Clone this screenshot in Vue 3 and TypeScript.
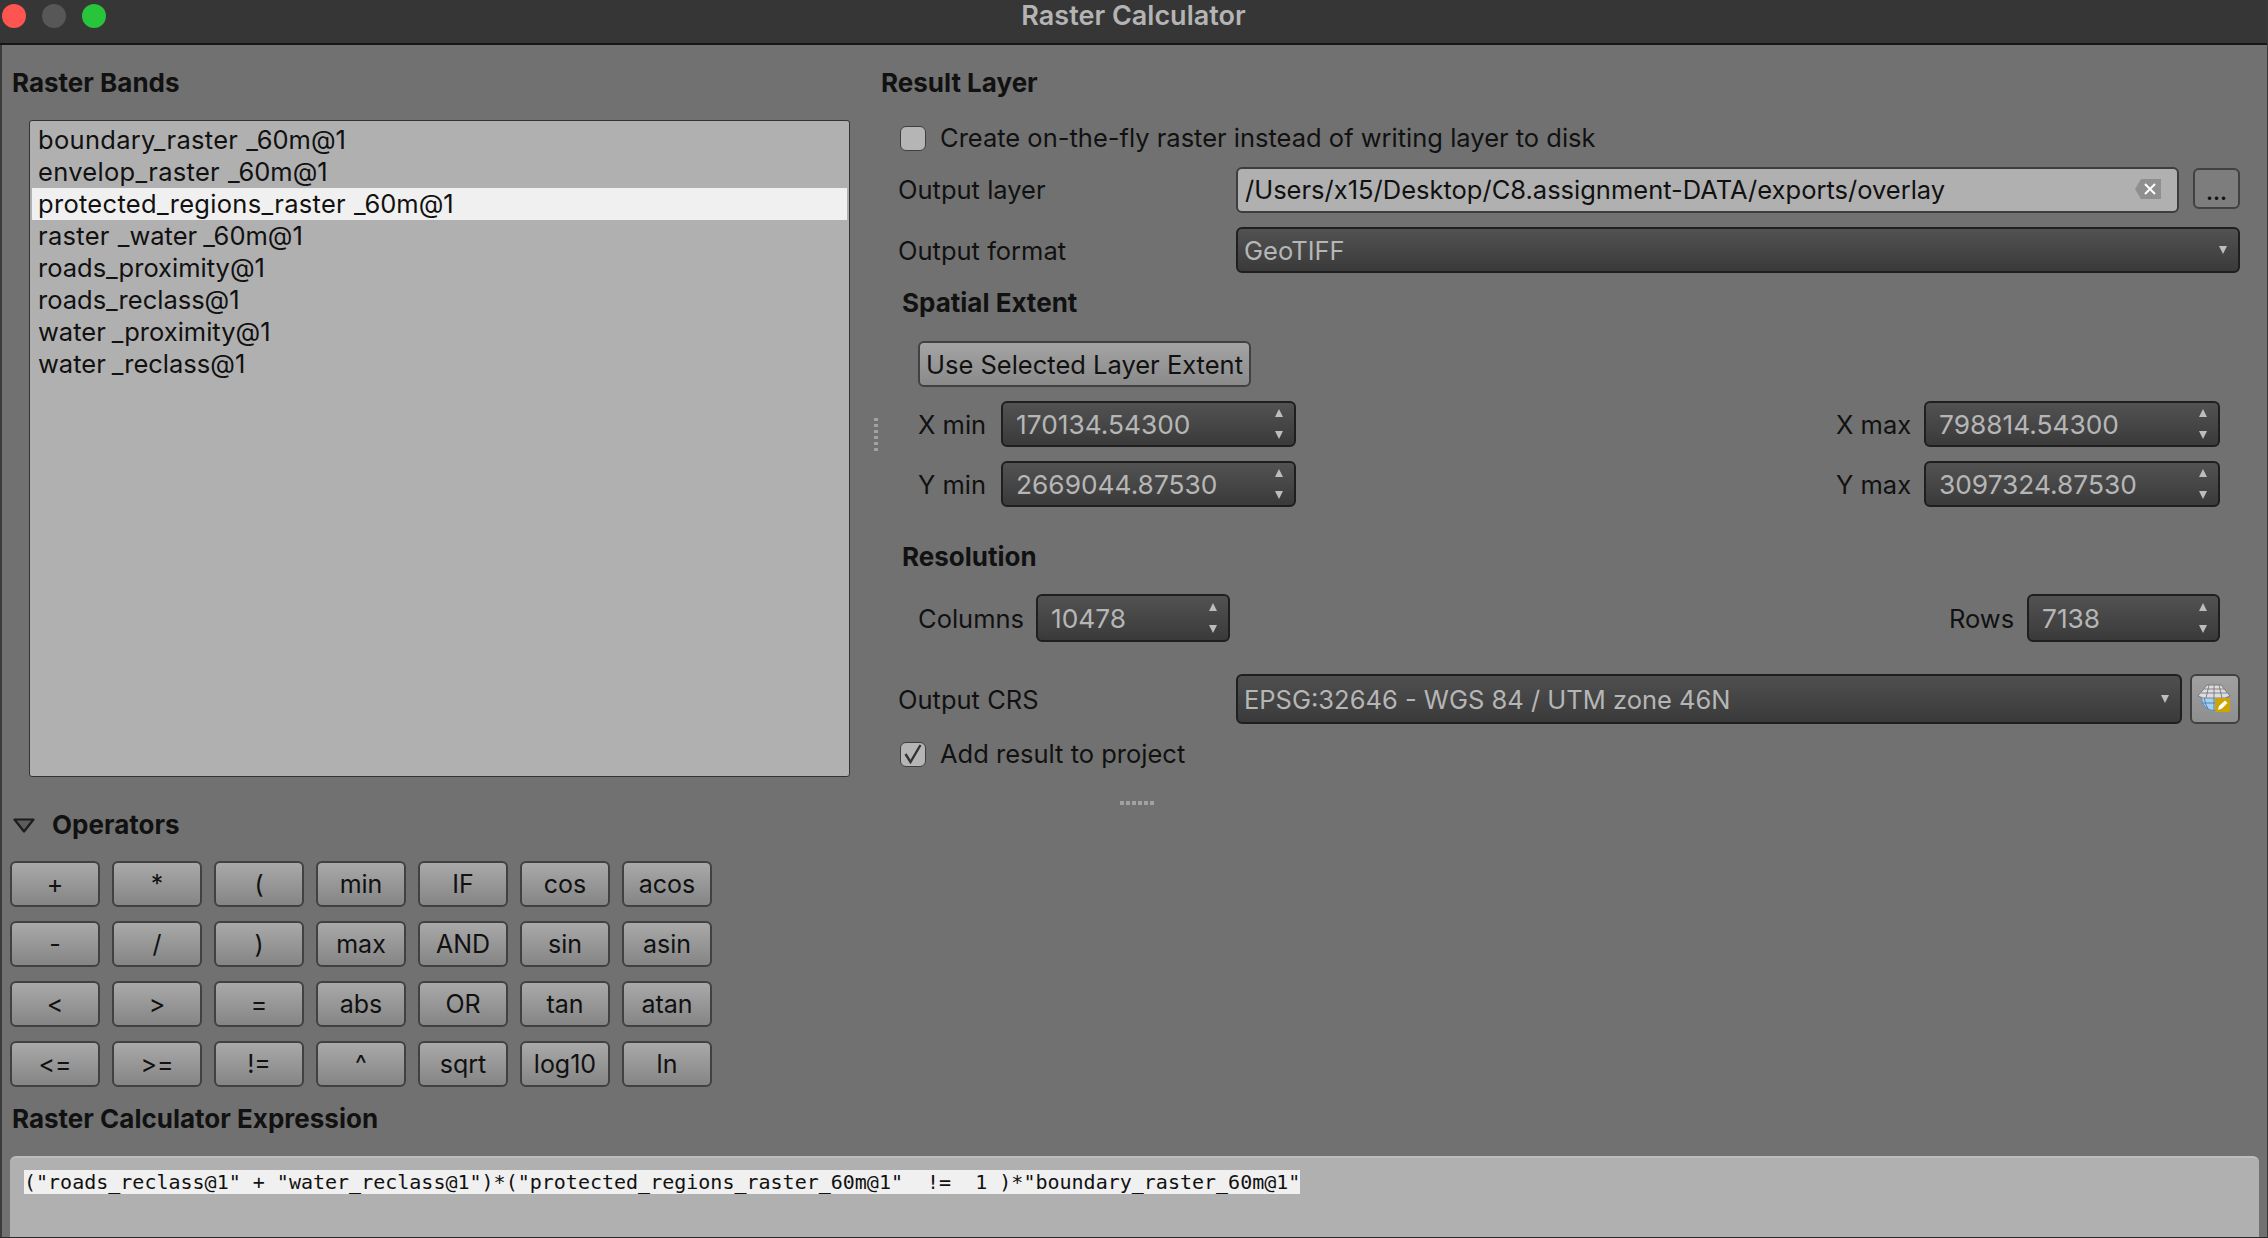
<script setup lang="ts">
const bands: string[] = [
  'boundary_raster_60m@1',
  'envelop_raster_60m@1',
  'protected_regions_raster_60m@1',
  'raster_water_60m@1',
  'roads_proximity@1',
  'roads_reclass@1',
  'water_proximity@1',
  'water_reclass@1',
]
const parts = (s: string): string[] => s.split(/(?<=r)(?=_)/)
const operators: string[] = [
  '+', '*', '(', 'min', 'IF', 'cos', 'acos',
  '-', '/', ')', 'max', 'AND', 'sin', 'asin',
  '<', '>', '=', 'abs', 'OR', 'tan', 'atan',
  '<=', '>=', '!=', '^', 'sqrt', 'log10', 'ln',
]
const extent = [
  { a: 'X min', av: '170134.54300', b: 'X max', bv: '798814.54300' },
  { a: 'Y min', av: '2669044.87530', b: 'Y max', bv: '3097324.87530' },
]
const expression = '("roads_reclass@1" + "water_reclass@1")*("protected_regions_raster_60m@1"  !=  1 )*"boundary_raster_60m@1"'
</script>

<template>
  <div class="window">
    <header class="titlebar">
      <div class="lights">
        <span class="light red"></span>
        <span class="light gray"></span>
        <span class="light green"></span>
      </div>
      <div class="title">Raster Calculator</div>
      <div></div>
    </header>

    <main class="body">
      <div class="top">
        <section class="left">
          <h2 class="heading">Raster Bands</h2>
          <ul class="bands">
            <li v-for="(b, i) in bands" :key="b" class="band" :class="{ selected: i === 2 }"><span v-for="(p, j) in parts(b)" :key="j" :class="{ 'kern-raster': p.endsWith('raster'), 'kern-water': p.endsWith('water') }">{{ p }}</span></li>
          </ul>
          <div class="op-head">
            <svg class="disclosure" width="22" height="15" viewBox="0 0 22 15">
              <path d="M1.5 1.5H20.5L11 13.5Z" fill="#5c5c5c" stroke="#1c1c1c" stroke-width="2.2" stroke-linejoin="round" />
            </svg>
            <h2 class="heading">Operators</h2>
          </div>
          <div class="ops">
            <button v-for="op in operators" :key="op" class="btn op">{{ op }}</button>
          </div>
        </section>

        <div class="vsplit"></div>

        <section class="right">
          <h2 class="heading">Result Layer</h2>

          <label class="check-row first">
            <span class="check"></span>
            <span>Create on-the-fly raster instead of writing layer to disk</span>
          </label>

          <div class="form-row out">
            <span class="form-label out-label">Output layer</span>
            <div class="path">
              <span class="path-text">/Users/x15/Desktop/C8.assignment-DATA/exports/overlay</span>
              <svg class="clear" width="26" height="20" viewBox="0 0 26 20">
                <path d="M0 10L6 0H26V20H6Z" fill="#8f8f8f" />
                <path d="M10 5L20 15M20 5L10 15" stroke="#fff" stroke-width="2" />
              </svg>
            </div>
            <button class="btn dots">...</button>
          </div>

          <div class="form-row fmt">
            <span class="form-label">Output format</span>
            <div class="combo wide">
              <span>GeoTIFF</span>
              <span class="arrow down"></span>
            </div>
          </div>

          <h3 class="heading sub">Spatial Extent</h3>
          <button class="btn use">Use Selected Layer Extent</button>

          <div class="extent">
            <div v-for="r in extent" :key="r.a" class="extent-row">
              <div class="pair">
                <span class="lab-min">{{ r.a }}</span>
                <div class="combo spin ext-spin">
                  <span>{{ r.av }}</span>
                  <span class="steppers"><span class="arrow up"></span><span class="arrow down"></span></span>
                </div>
              </div>
              <div class="pair">
                <span class="lab-max">{{ r.b }}</span>
                <div class="combo spin ext-spin max">
                  <span>{{ r.bv }}</span>
                  <span class="steppers"><span class="arrow up"></span><span class="arrow down"></span></span>
                </div>
              </div>
            </div>
          </div>

          <h3 class="heading sub res">Resolution</h3>
          <div class="extent-row res-row">
            <div class="pair">
              <span class="lab-col">Columns</span>
              <div class="combo spin col-spin">
                <span>10478</span>
                <span class="steppers"><span class="arrow up"></span><span class="arrow down"></span></span>
              </div>
            </div>
            <div class="pair">
              <span class="lab-rows">Rows</span>
              <div class="combo spin rows-spin">
                <span>7138</span>
                <span class="steppers"><span class="arrow up"></span><span class="arrow down"></span></span>
              </div>
            </div>
          </div>

          <div class="form-row crs">
            <span class="form-label">Output CRS</span>
            <div class="combo crs-combo">
              <span>EPSG:32646 - WGS 84 / UTM zone 46N</span>
              <span class="arrow down"></span>
            </div>
            <button class="btn globe">
              <svg width="34" height="32" viewBox="0 0 34 32">
                <circle cx="16" cy="15" r="12.5" fill="#a6d0f2" stroke="#5f8db5" stroke-width="1" />
                <path d="M16 3V28M8 5Q4 16 10 26M24 5Q28 16 22 26M4 20H28" fill="none" stroke="#4d82b0" stroke-width="1" />
                <path d="M9 2L23 2L32 13L27 15L5 15L0 13Z" fill="#dcdddf" stroke="#6f6f6f" stroke-width="0.8" />
                <path d="M16 2V15M11 2L8 15M21 2L24 15M6 6H26M3 10H29" fill="none" stroke="#6f6f6f" stroke-width="0.8" />
                <rect x="17" y="15" width="15" height="14" rx="1.5" fill="#cda400" />
                <path d="M20 27L21 23L27 17.500L29.500 20L24 25.500Z" fill="#fff" />
              </svg>
            </button>
          </div>

          <label class="check-row add">
            <span class="check">
              <svg width="22" height="22" viewBox="0 0 22 22">
                <path d="M3.500 11L8.500 19L18.500 2" fill="none" stroke="#333" stroke-width="2.4" />
              </svg>
            </span>
            <span>Add result to project</span>
          </label>

          <div class="hsplit"></div>
        </section>
      </div>

      <h2 class="heading expr-head">Raster Calculator Expression</h2>
      <div class="expr">
        <span class="expr-text">{{ expression }}</span>
      </div>
    </main>
  </div>
</template>

<style>
html, body { margin: 0; padding: 0; background: #717171; overflow: hidden; }
</style>

<style scoped>
* { box-sizing: border-box; }
.window {
  width: 2268px; height: 1238px; display: flex; flex-direction: column; overflow: hidden;
  background: #717171; color: #111;
  font-family: Inter, "Liberation Sans", sans-serif; font-size: 25.5px;
  border-right: 1px solid #3a3a3a; border-bottom: 1px solid #2a2a2a;
}
.titlebar {
  height: 45px; flex: none; display: grid; grid-template-columns: 1fr auto 1fr; align-items: center;
  background: #363636; border-bottom: 2px solid #161616; padding-bottom: 12px;
}
.lights { display: flex; gap: 16px; padding-left: 2px; }
.light { width: 24px; height: 24px; border-radius: 50%; }
.red { background: #fe5550; }
.gray { background: #575757; }
.green { background: #27c43c; }
.title { color: #b4b4b4; font-weight: 600; font-size: 27px; line-height: 30px; }

.body { flex: 1; min-height: 0; display: flex; flex-direction: column; border-left: 2px solid #3c3c3c; }
.top { display: flex; height: 1042px; flex: none; }
.left { width: 868px; flex: none; padding-top: 23px; }
.heading { margin: 0; font-size: 26px; font-weight: 700; line-height: 30px; padding-left: 10px; }
.bands {
  list-style: none; margin: 22px 0 0 27px; padding: 3px 2px; width: 821px; height: 657px;
  background: #b0b0b0; border: 1px solid #333; border-radius: 3px;
}
.band { height: 32px; line-height: 32px; padding-left: 6px; font-size: 25.5px; white-space: nowrap; }
.kern-raster { margin-right: 8px; letter-spacing: .3px; }
.kern-water { margin-right: 6px; }
.selected { background: #f0f0f0; }
.op-head { display: flex; align-items: center; margin-top: 33px; padding-left: 11px; }
.op-head .heading { padding-left: 17px; }
.ops {
  display: grid; grid-template-columns: repeat(7, 90px); grid-auto-rows: 46px; column-gap: 12px; row-gap: 14px;
  margin: 21px 0 0 8px;
}
.btn {
  font: inherit; color: #111; padding: 0; border: 2px solid #414141; border-radius: 6px;
  background: linear-gradient(#a9a9a9, #858585); display: flex; align-items: center; justify-content: center;
}
.op { font-size: 25px; }

.vsplit {
  width: 4px; height: 34px; margin: 373px 3px 0 4px; flex: none;
  background: repeating-linear-gradient(#b2b2b2 0 3px, transparent 3px 6px);
  opacity: .75;
}
.right { width: 1387px; flex: none; padding-top: 23px; position: relative; }
.right > .heading:first-child { padding-left: 0; }
.check-row { display: flex; align-items: center; gap: 14px; margin-left: 19px; line-height: 26px; }
.check {
  width: 26px; height: 25px; border: 1.500px solid #3f3f3f; border-radius: 6px; background: #b5b5b5;
  display: flex; align-items: center; justify-content: center; flex: none;
}
.first { margin-top: 27px; }
.form-row { display: flex; align-items: center; margin-left: 17px; }
.form-label { width: 338px; flex: none; }
.out-label { padding-bottom: 2px; }
.out { margin-top: 16px; }
.path {
  width: 943px; height: 46px; flex: none; display: flex; align-items: center; justify-content: space-between;
  padding: 0 16px 2px 7px; background: #b0b0b0; border: 2px solid #3d3d3d; border-radius: 6px;
}
.dots { width: 47px; height: 41px; margin: -4px 0 0 14px; font-size: 22px; font-weight: 600; padding-bottom: 0; align-items: flex-end; line-height: 30px; border-width: 2px; background: #7d7d7d; }
.fmt { margin-top: 14px; }
.combo {
  display: flex; align-items: center; justify-content: space-between; color: #b6b6b6;
  background: linear-gradient(#525252, #3a3a3a); border: 2px solid #1f1f1f; border-radius: 6px;
}
.wide { width: 1004px; height: 46px; flex: none; padding: 0 11px 0 6px; }
.arrow { width: 0; height: 0; border-left: 4.500px solid transparent; border-right: 4.500px solid transparent; display: block; }
.arrow.down { border-top: 8px solid #bdbdbd; }
.arrow.up { border-bottom: 8px solid #bdbdbd; }
.sub { padding-left: 21px; margin-left: 0; }
.fmt + .sub { margin-top: 15px; }
.use { width: 333px; height: 46px; margin: 23px 0 0 37px; white-space: nowrap; background: linear-gradient(#a4a4a4, #8a8a8a); }
.extent { display: flex; flex-direction: column; gap: 14px; margin-top: 14px; }
.extent-row { display: flex; justify-content: space-between; align-items: center; margin: 0 48px 0 37px; }
.pair { display: flex; align-items: center; }
.lab-min { width: 83px; }
.lab-max { width: 88px; }
.lab-col { width: 118px; }
.lab-rows { width: 78px; }
.spin { height: 46px; padding: 0 11px 0 13px; font-size: 26.3px; }
.ext-spin { width: 295px; }
.ext-spin.max { width: 296px; }
.col-spin { width: 194px; height: 48px; }
.rows-spin { width: 193px; height: 48px; }
.steppers { display: flex; flex-direction: column; gap: 14px; }
.res { margin-top: 35px; }
.res-row { margin-top: 22px; }
.crs { margin-top: 32px; }
.crs-combo { width: 946px; height: 50px; flex: none; padding: 0 11px 0 6px; background: linear-gradient(#4f4f4f, #3a3a3a); }
.globe { width: 50px; height: 50px; margin-left: 8px; background: linear-gradient(#a0a0a0, #8e8e8e); }
.add { margin-top: 17px; }
.hsplit {
  width: 35px; height: 4px; margin: 34px 0 0 239px;
  background: repeating-linear-gradient(90deg, #b2b2b2 0 4px, transparent 4px 6px);
  opacity: .75;
}

.expr-head { margin-top: 17px; }
.expr {
  margin: 22px 8px 0 8px; flex: 1; min-height: 0; padding: 12px 14px 0;
  background: #b0b0b0; border-top: 2px solid #bdbdbd; border-radius: 6px 6px 0 0;
}
.expr-text {
  display: block; width: fit-content; height: 24px; line-height: 24px; background: #f0f0f0; white-space: pre;
  font-family: "DejaVu Sans Mono", monospace; font-size: 20px; color: #111;
}
</style>
